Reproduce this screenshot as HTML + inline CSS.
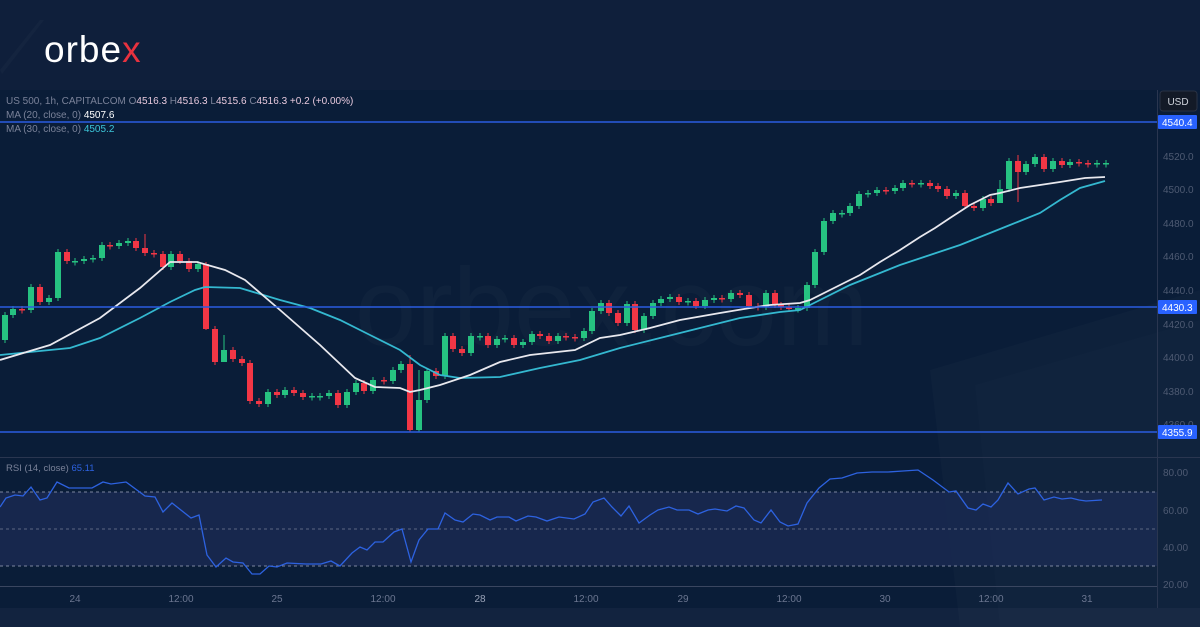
<!DOCTYPE html>
<html><head><meta charset="utf-8"><style>
html,body{margin:0;padding:0;width:1200px;height:627px;overflow:hidden;background:#0f1f3b;font-family:"Liberation Sans",sans-serif}
svg{position:absolute;left:0;top:0}
</style></head><body>
<svg id="s" width="1200" height="627" viewBox="0 0 1200 627" xmlns="http://www.w3.org/2000/svg">
<rect width="1200" height="627" fill="#0f1f3b"/>
<rect x="0" y="90" width="1200" height="518" fill="#0a1d38"/>
<rect x="0" y="608" width="1200" height="19" fill="#12233f"/>
<!-- decorative shapes -->
<polygon points="930,370 1200,290 1200,627 960,627" fill="#ffffff" opacity="0.018"/>
<polygon points="975,385 1200,320 1200,627 1000,627" fill="#ffffff" opacity="0.012"/>
<polygon points="0,70 40,20 44,20 2,74" fill="#ffffff" opacity="0.025"/>
<text x="355" y="345" font-size="110" fill="#ffffff" opacity="0.02" font-family="Liberation Sans">orbex.com</text>
<!-- logo -->
<text x="44" y="62" font-size="37" fill="#ffffff" font-family="Liberation Sans" letter-spacing="1">orbe<tspan fill="#e8323f">x</tspan></text>
<!-- rsi band -->
<rect x="0" y="492" width="1157" height="74" fill="#1a2a52" opacity="0.8"/>
<line x1="0" y1="492" x2="1157" y2="492" stroke="#7c86a0" stroke-dasharray="3,3" stroke-width="1"/>
<line x1="0" y1="529" x2="1157" y2="529" stroke="#5d6782" stroke-dasharray="3,3" stroke-width="1"/>
<line x1="0" y1="566" x2="1157" y2="566" stroke="#7c86a0" stroke-dasharray="3,3" stroke-width="1"/>
<line x1="0" y1="457.5" x2="1200" y2="457.5" stroke="#2a3650" stroke-width="1"/>
<line x1="0" y1="586.5" x2="1157" y2="586.5" stroke="#3a4660" stroke-width="1"/>
<line x1="1157.5" y1="90" x2="1157.5" y2="608" stroke="#2a3650" stroke-width="1"/>
<g id="candles"></g>
<polyline fill="none" stroke="#34b8d0" stroke-width="1.8" points="0,355 50,350 70,348 100,338 140,318 170,302 195,290 205,287 240,288 280,300 310,308 340,320 370,335 400,350 420,365 440,375 460,378 500,377 540,368 580,360 620,348 660,338 700,328 740,318 780,312 800,310 820,300 850,285 880,273 900,265 930,255 960,245 990,233 1010,225 1040,213 1060,200 1080,188 1105,181"/>
<polyline fill="none" stroke="#e8e8ee" stroke-width="1.8" points="0,360 50,345 100,318 140,288 170,262 197,262 225,270 245,280 280,310 320,345 355,378 375,387 400,388 410,392 420,390 440,385 470,375 500,362 530,355 575,350 600,338 620,335 650,328 680,320 720,313 750,308 770,305 800,303 810,300 840,285 860,275 880,262 900,250 920,237 935,228 950,218 970,205 990,195 1000,193 1020,188 1040,185 1060,182 1085,178 1105,177"/>
<line x1="0" y1="122" x2="1157" y2="122" stroke="#2a5de0" stroke-width="1.6"/>
<line x1="0" y1="307" x2="1157" y2="307" stroke="#2a5de0" stroke-width="1.6"/>
<line x1="0" y1="432" x2="1157" y2="432" stroke="#2a5de0" stroke-width="1.6"/>
<polyline fill="none" stroke="#2d62e0" stroke-width="1.3" points="0,507 6,498 15,495 23,496 31,487 40,500 47,498 57,482 69,488 92,488 103,482 111,484 126,482 145,496 155,497 163,512 172,503 191,518 199,515 207,555 216,567 226,558 233,562 243,563 252,574 260,574 269,566 277,567 287,563 306,564 321,564 331,561 340,566 352,553 360,547 367,550 375,542 383,542 394,532 402,529 411,562 419,540 428,529 438,529 445,513 455,520 463,522 473,514 480,515 490,520 497,517 509,517 516,521 528,516 536,517 547,521 559,517 574,519 585,514 593,502 604,498 612,507 621,516 629,506 639,523 650,515 658,510 669,507 677,510 689,510 698,514 708,510 715,509 727,511 736,506 744,508 754,520 761,523 771,510 780,522 788,526 798,524 807,503 819,488 830,479 842,478 857,473 872,472 888,472 903,471 918,470 933,480 949,492 956,491 968,508 976,510 983,504 991,507 998,500 1008,483 1018,494 1029,489 1035,488 1044,500 1054,497 1062,499 1071,498 1079,500 1086,501 1102,500"/>
<!-- legend -->
<g font-size="10" font-family="Liberation Sans">
<text x="6" y="104" fill="#7a8299">US 500, 1h, CAPITALCOM  O<tspan fill="#e6c8dc">4516.3</tspan>  H<tspan fill="#e6c8dc">4516.3</tspan>  L<tspan fill="#e6c8dc">4515.6</tspan>  C<tspan fill="#e6c8dc">4516.3</tspan>  <tspan fill="#e6c8dc">+0.2 (+0.00%)</tspan></text>
<text x="6" y="118" fill="#7a8299">MA (20, close, 0)  <tspan fill="#ffffff">4507.6</tspan></text>
<text x="6" y="132" fill="#7a8299">MA (30, close, 0)  <tspan fill="#3cc5d8">4505.2</tspan></text>
<text x="6" y="471" fill="#7a8299" font-size="9.5">RSI (14, close)  <tspan fill="#2d62e0">65.11</tspan></text>
</g>
<!-- right axis -->
<rect x="1160" y="91" width="37" height="20" rx="3" fill="#131a27" stroke="#2a3244"/>
<text x="1178" y="105" fill="#d0d4dc" font-size="10" text-anchor="middle">USD</text>
<g font-size="10" fill="#4e5a72" font-family="Liberation Sans">
<text x="1163" y="160">4520.0</text><text x="1163" y="193">4500.0</text><text x="1163" y="227">4480.0</text><text x="1163" y="260">4460.0</text><text x="1163" y="294">4440.0</text><text x="1163" y="328">4420.0</text><text x="1163" y="361">4400.0</text><text x="1163" y="395">4380.0</text><text x="1163" y="428">4360.0</text>
<text x="1163" y="476">80.00</text><text x="1163" y="514">60.00</text><text x="1163" y="551">40.00</text><text x="1163" y="588">20.00</text>
</g>
<g font-size="10" fill="#ffffff" font-family="Liberation Sans">
<rect x="1158" y="115" width="39" height="14" rx="1" fill="#2962ff"/><text x="1162" y="126">4540.4</text>
<rect x="1158" y="300" width="39" height="14" rx="1" fill="#2962ff"/><text x="1162" y="311">4430.3</text>
<rect x="1158" y="425" width="39" height="14" rx="1" fill="#2962ff"/><text x="1162" y="436">4355.9</text>
</g>
<g font-size="10" fill="#6b7690" text-anchor="middle" font-family="Liberation Sans">
<text x="75" y="602">24</text><text x="181" y="602">12:00</text><text x="277" y="602">25</text><text x="383" y="602">12:00</text><text x="480" y="602" fill="#9aa3b8">28</text><text x="586" y="602">12:00</text><text x="683" y="602">29</text><text x="789" y="602">12:00</text><text x="885" y="602">30</text><text x="991" y="602">12:00</text><text x="1087" y="602">31</text>
</g>
</svg>
<script>
var d=[[5,340,315],[13,309],[22,310],[31,287],[40,302],[49,298],[58,252],[67,261],[75,261],[84,259],[93,258],[102,245],[110,246],[119,243],[128,241],[136,248],[145,253],[154,254],[163,267],[171,254],[180,261],[189,269],[198,264],[206,329],[215,362],[224,350],[233,359],[242,363],[250,401],[259,404],[268,392],[277,395],[285,390],[294,393],[303,397],[312,396],[320,396],[329,393],[338,405],[347,392],[356,383],[364,391],[373,380],[384,381],[393,370],[401,364],[410,430],[419,400],[427,371],[436,376],[445,336],[453,349],[462,353],[471,336],[480,336],[488,345],[497,339],[505,338],[514,345],[523,342],[532,334],[540,336],[549,341],[558,336],[566,337],[575,338],[584,331],[592,311],[601,303],[609,313],[618,323],[627,304],[635,330],[644,316],[653,303],[661,299],[670,297],[679,302],[688,301],[696,306],[705,300],[714,298],[722,299],[731,293],[740,295],[749,306],[758,307],[766,293],[775,305],[781,307],[789,309],[798,308],[807,285],[815,252],[824,221],[833,213],[842,213],[850,206],[859,194],[868,193],[877,190],[886,191],[895,188],[903,183],[912,184],[921,183],[930,186],[938,189],[947,196],[956,193],[965,206],[974,208],[983,199],[991,203],[1000,189],[1009,161],[1018,172],[1026,164],[1035,157],[1044,169],[1053,161],[1062,165],[1070,162],[1079,163],[1088,164],[1097,163],[1106,163]];
var g=document.getElementById('candles'),h='',prev=340;
var big={410:[355,432],206:[262,330],1018:[155,202],224:[335,352],145:[234,256],1000:[180,200],419:[370,432]};
for(var i=0;i<d.length;i++){var x=d[i][0],o,c;if(d[i].length==3){o=d[i][1];c=d[i][2];}else{o=prev;c=d[i][1];}
var up=c<=o,col=up?'#26c281':'#f23645';var t=Math.min(o,c),b=Math.max(o,c);if(b-t<1.5){b=t+1.5;}
var hi=t-3,lo=b+3;if(big[x]){hi=big[x][0];lo=big[x][1];}
h+='<line x1="'+x+'" y1="'+hi+'" x2="'+x+'" y2="'+lo+'" stroke="'+col+'" stroke-width="1"/>';
h+='<rect x="'+(x-3)+'" y="'+t+'" width="6" height="'+(b-t)+'" fill="'+col+'"/>';prev=c;}
g.innerHTML=h;
</script>
</body></html>
